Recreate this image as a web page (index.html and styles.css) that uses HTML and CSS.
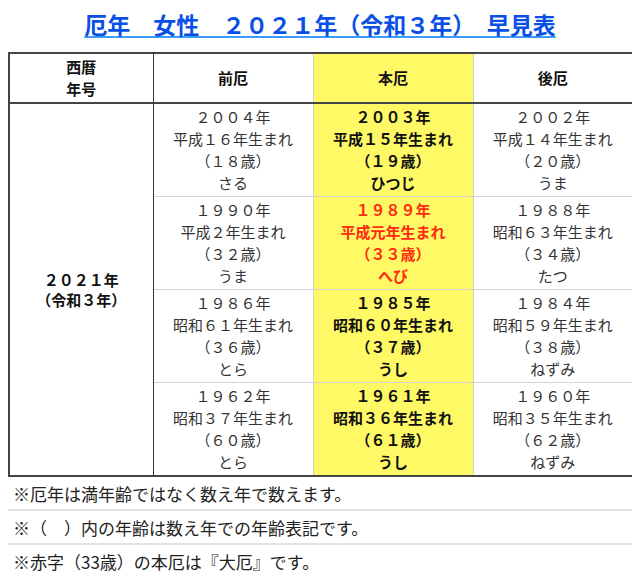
FILE: index.html
```html
<!DOCTYPE html>
<html lang="ja">
<head>
<meta charset="utf-8">
<title>厄年 女性 2021年 早見表</title>
<link rel="stylesheet" href="styles.css">
</head>
<body>
<h1 class="title"><a class="title-link">厄年　女性　２０２１年（令和３年）　早見表</a></h1>
<table class="yakudoshi">
  <colgroup>
    <col class="c-year">
    <col class="c-mae">
    <col class="c-hon">
    <col class="c-ato">
  </colgroup>
  <thead>
    <tr>
      <th class="year">西暦<br>年号</th>
      <th>前厄</th>
      <th class="hon">本厄</th>
      <th>後厄</th>
    </tr>
  </thead>
  <tbody>
    <tr>
      <td class="year" rowspan="4">２０２１年<br>（令和３年）</td>
      <td>２００４年<br>平成１６年生まれ<br>（１８歳）<br>さる</td>
      <td class="hon">２００３年<br>平成１５年生まれ<br>（１９歳）<br>ひつじ</td>
      <td>２００２年<br>平成１４年生まれ<br>（２０歳）<br>うま</td>
    </tr>
    <tr>
      <td>１９９０年<br>平成２年生まれ<br>（３２歳）<br>うま</td>
      <td class="hon red">１９８９年<br>平成元年生まれ<br>（３３歳）<br>へび</td>
      <td>１９８８年<br>昭和６３年生まれ<br>（３４歳）<br>たつ</td>
    </tr>
    <tr>
      <td>１９８６年<br>昭和６１年生まれ<br>（３６歳）<br>とら</td>
      <td class="hon">１９８５年<br>昭和６０年生まれ<br>（３７歳）<br>うし</td>
      <td>１９８４年<br>昭和５９年生まれ<br>（３８歳）<br>ねずみ</td>
    </tr>
    <tr>
      <td>１９６２年<br>昭和３７年生まれ<br>（６０歳）<br>とら</td>
      <td class="hon">１９６１年<br>昭和３６年生まれ<br>（６１歳）<br>うし</td>
      <td>１９６０年<br>昭和３５年生まれ<br>（６２歳）<br>ねずみ</td>
    </tr>
  </tbody>
</table>
<ul class="notes">
  <li>※厄年は満年齢ではなく数え年で数えます。</li>
  <li>※（　）内の年齢は数え年での年齢表記です。</li>
  <li>※赤字（33歳）の本厄は『大厄』です。</li>
</ul>
</body>
</html>
```
FILE: styles.css
```css
body {
  margin: 8px;
  font-family: "Noto Sans CJK JP", "Noto Sans", sans-serif;
  color: #222;
  background: #fff;
}

.title {
  margin: 0 0 12px;
  font-size: 23px;
  line-height: 32px;
  font-weight: bold;
  text-align: center;
}

.title-link {
  color: #0a4fe6;
  text-decoration: underline;
  text-decoration-color: #3b9bff;
  text-underline-offset: 2px;
}

.yakudoshi {
  width: 624px;
  border-collapse: collapse;
  table-layout: fixed;
  border: 2px solid #444;
  font-size: 15px;
}

.c-year { width: 144px; }
.c-mae, .c-hon, .c-ato { width: 160px; }

.yakudoshi th,
.yakudoshi td {
  text-align: center;
  vertical-align: middle;
  padding: 0;
}

.yakudoshi th {
  height: 48px;
  line-height: 22px;
  font-weight: bold;
  color: #111;
  border-bottom: 2px solid #444;
}

.yakudoshi td {
  height: 92px;
  line-height: 22px;
  color: #333;
  border-top: 1px solid #d4d4d4;
}

.yakudoshi .year {
  border-right: 1px solid #333;
}

.yakudoshi td.year {
  font-weight: bold;
  color: #111;
  line-height: 20px;
}

.yakudoshi .hon {
  background: #fff966;
  border-left: 1px solid #cfcfcf;
  border-right: 1px solid #cfcfcf;
}

.yakudoshi td.hon {
  font-weight: bold;
  color: #111;
}

.yakudoshi td.red {
  color: #ff2a10;
}

.notes {
  list-style: none;
  margin: 0;
  padding: 0;
  width: 624px;
}

.notes li {
  font-size: 17px;
  line-height: 20px;
  padding: 7px 5px 5px;
  border-bottom: 2px solid #e2e2e2;
  color: #222;
}
```
